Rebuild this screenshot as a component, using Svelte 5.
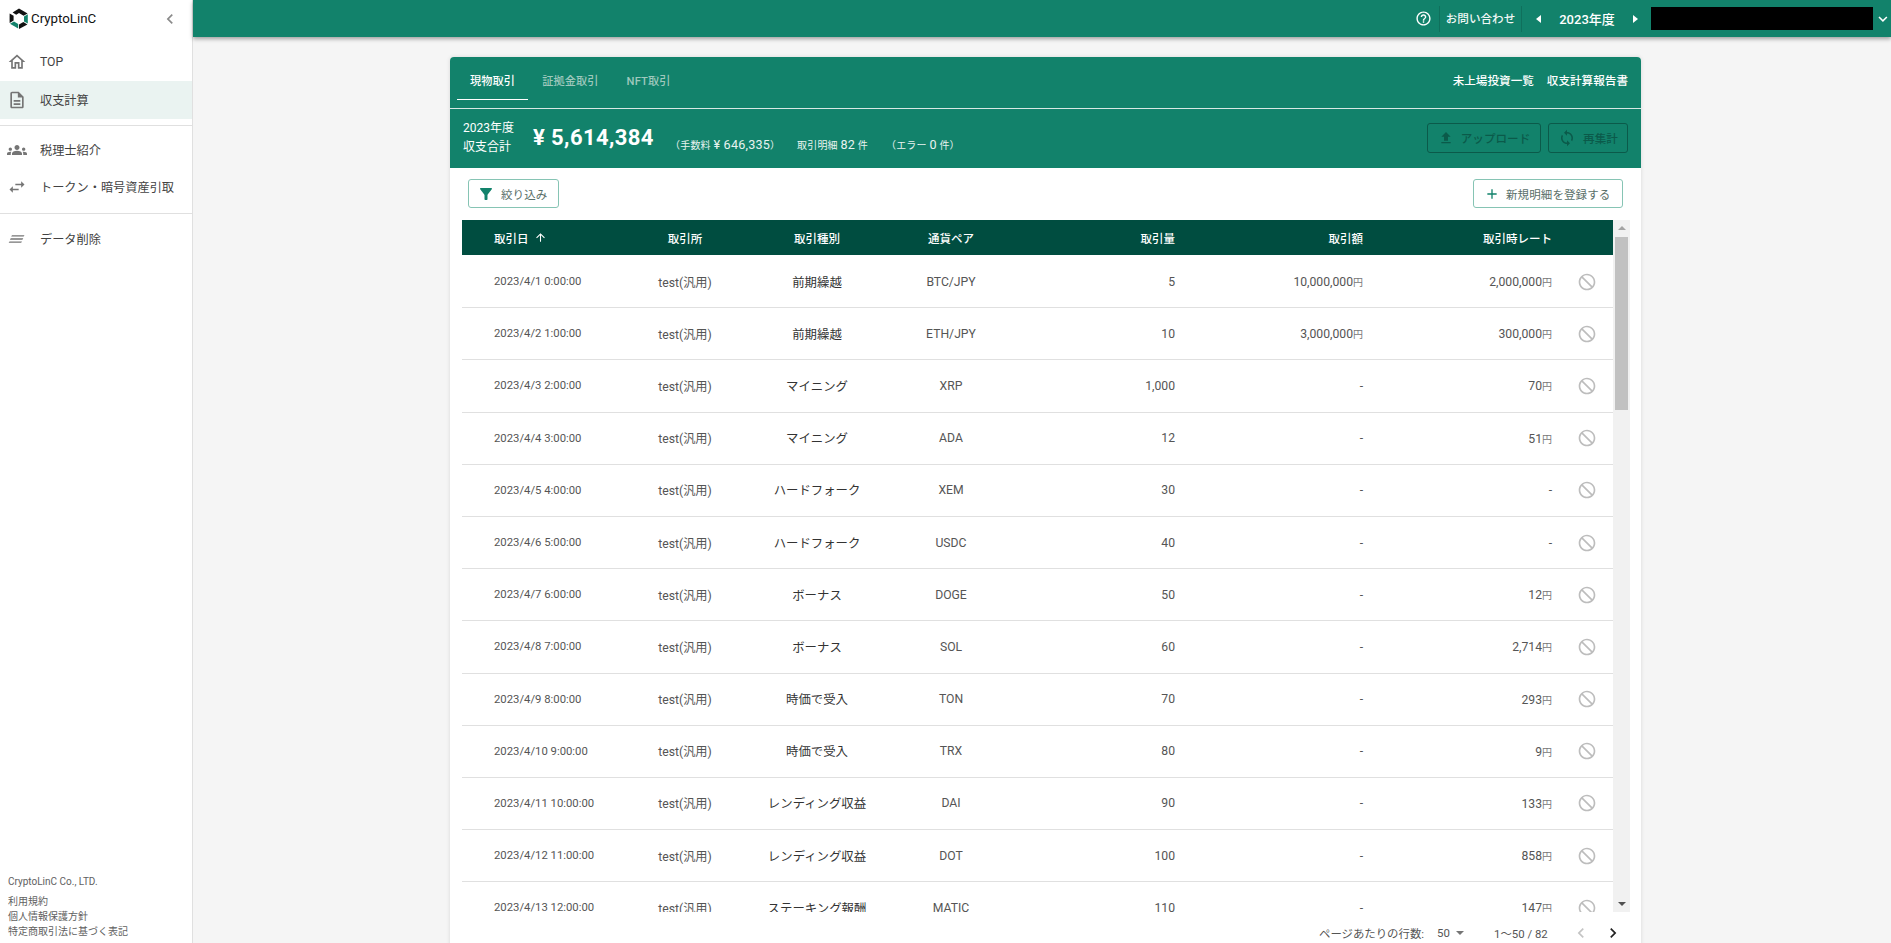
<script>
  const P = {
    home: 'M12 5.69l5 4.5V18h-2v-6H9v6H7v-7.81l5-4.5M12 3L2 12h3v8h6v-6h2v6h6v-8h3L12 3z',
    doc: 'M8 16h8v2H8zm0-4h8v2H8zm6-10H6c-1.1 0-2 .9-2 2v16c0 1.1.89 2 1.99 2H18c1.1 0 2-.9 2-2V8l-6-6zm4 18H6V4h7v5h5v11z',
    groups: 'M4 13c1.1 0 2-.9 2-2 0-1.1-.9-2-2-2s-2 .9-2 2c0 1.1.9 2 2 2zm1.13 1.1c-.37-.06-.74-.1-1.13-.1-.99 0-1.93.21-2.78.58C.48 14.9 0 15.62 0 16.43V18h4.5v-1.61c0-.83.23-1.61.63-2.29zM20 13c1.1 0 2-.9 2-2 0-1.1-.9-2-2-2s-2 .9-2 2c0 1.1.9 2 2 2zm4 3.43c0-.81-.48-1.53-1.22-1.85-.85-.37-1.79-.58-2.78-.58-.39 0-.76.04-1.13.1.4.68.63 1.46.63 2.29V18H24v-1.57zm-7.76-2.78C15.07 13.13 13.63 12.75 12 12.75c-1.63 0-3.07.39-4.24.9C6.68 14.13 6 15.21 6 16.39V18h12v-1.61c0-1.18-.68-2.26-1.76-2.74zM12 6c1.66 0 3 1.34 3 3 0 1.66-1.34 3-3 3s-3-1.34-3-3c0-1.66 1.34-3 3-3z',
    swap: 'M6.99 11L3 15l3.99 4v-3H14v-2H6.99v-3zM21 9l-3.99-4v3H10v2h7.01v3L21 9z',
    lines: 'M6 7.5h15l-1 1.6H5zM4.5 11.2h15l-1 1.6h-15zM3 14.9h15l-1 1.6H2z',
    help: 'M11 18h2v-2h-2v2zm1-16C6.48 2 2 6.48 2 12s4.48 10 10 10 10-4.48 10-10S17.52 2 12 2zm0 18c-4.41 0-8-3.59-8-8s3.59-8 8-8 8 3.59 8 8-3.59 8-8 8zm0-14c-2.21 0-4 1.79-4 4h2c0-1.1.9-2 2-2s2 .9 2 2c0 2-3 1.75-3 5h2c0-2.25 3-2.5 3-5 0-2.21-1.79-4-4-4z',
    filter: 'M4.25 5.61C6.27 8.2 10 13 10 13v6c0 .55.45 1 1 1h2c.55 0 1-.45 1-1v-6s3.72-4.8 5.74-7.39c.51-.66.04-1.61-.79-1.61H5.04c-.83 0-1.3.95-.79 1.61z',
    upload: 'M9 16h6v-6h4l-7-7-7 7h4zm-4 2h14v2H5z',
    sync: 'M12 4V1L8 5l4 4V6c3.31 0 6 2.69 6 6 0 1.01-.25 1.97-.7 2.8l1.46 1.46C19.54 15.03 20 13.57 20 12c0-4.42-3.58-8-8-8zm0 14c-3.31 0-6-2.69-6-6 0-1.01.25-1.97.7-2.8L5.24 7.74C4.46 8.97 4 10.43 4 12c0 4.42 3.58 8 8 8v3l4-4-4-4v3z',
    plus: 'M19 13h-6v6h-2v-6H5v-2h6V5h2v6h6v2z',
    block: 'M12 2C6.48 2 2 6.48 2 12s4.48 10 10 10 10-4.48 10-10S17.52 2 12 2zM4 12c0-4.42 3.58-8 8-8 1.85 0 3.55.63 4.9 1.69L5.69 16.9C4.63 15.55 4 13.85 4 12zm8 8c-1.85 0-3.55-.63-4.9-1.69L18.31 7.1C19.37 8.45 20 10.15 20 12c0 4.42-3.58 8-8 8z',
    left: 'M15.41 7.41L14 6l-6 6 6 6 1.41-1.41L10.83 12z',
    right: 'M10 6L8.59 7.41 13.17 12l-4.58 4.59L10 18l6-6z',
    down: 'M7.41 8.59L12 13.17l4.59-4.58L18 10l-6 6-6-6z',
    arrowUp: 'M4 12l1.41 1.41L11 7.83V20h2V7.83l5.58 5.59L20 12l-8-8-8 8z'
  };
  const rows = [
    ['2023/4/1 0:00:00','前期繰越','BTC/JPY','5','10,000,000','2,000,000'],
    ['2023/4/2 1:00:00','前期繰越','ETH/JPY','10','3,000,000','300,000'],
    ['2023/4/3 2:00:00','マイニング','XRP','1,000','','70'],
    ['2023/4/4 3:00:00','マイニング','ADA','12','','51'],
    ['2023/4/5 4:00:00','ハードフォーク','XEM','30','',''],
    ['2023/4/6 5:00:00','ハードフォーク','USDC','40','',''],
    ['2023/4/7 6:00:00','ボーナス','DOGE','50','','12'],
    ['2023/4/8 7:00:00','ボーナス','SOL','60','','2,714'],
    ['2023/4/9 8:00:00','時価で受入','TON','70','','293'],
    ['2023/4/10 9:00:00','時価で受入','TRX','80','','9'],
    ['2023/4/11 10:00:00','レンディング収益','DAI','90','','133'],
    ['2023/4/12 11:00:00','レンディング収益','DOT','100','','858'],
    ['2023/4/13 12:00:00','ステーキング報酬','MATIC','110','','147']
  ];
</script>

{#snippet icon(name, size, cls = '')}
  <svg class={cls} width={size} height={size} viewBox="0 0 24 24" fill="currentColor" aria-hidden="true"><path d={P[name]} /></svg>
{/snippet}

{#snippet yen(v)}
  {#if v}{v}<span class="unit">円</span>{:else}-{/if}
{/snippet}

<div class="app">
  <aside class="side">
    <div class="brand">
      <div class="logo">
        <svg width="20" height="21" viewBox="0 0 20 21" aria-hidden="true">
          <path d="M10 0.5 L18.6 5.4 L14.6 7.7 L10 5.1 L7.2 6.7 L3.6 4.4Z" fill="#111" />
          <path d="M18.8 6.2 V15.6 L15 13.4 V8.4 Z" fill="#12826b" />
          <path d="M18.4 16.4 L10 21 V16.6 L14.4 14.1Z" fill="#111" />
          <path d="M9.2 20.6 L1 15.8 L5 13.6 L9.2 16Z" fill="#12826b" />
          <path d="M0.6 15 V5.4 L4.6 7.7 V12.6Z" fill="#111" />
        </svg>
        <span>CryptoLinC</span>
      </div>
      {@render icon('left', 20, 'collapse')}
    </div>
    <nav class="nav first">
      <div class="item">{@render icon('home', 20)}<span>TOP</span></div>
      <div class="item active">{@render icon('doc', 20)}<span>収支計算</span></div>
    </nav>
    <nav class="nav second">
      <div class="item tall">{@render icon('groups', 20)}<span>税理士紹介</span></div>
      <div class="item tall">{@render icon('swap', 20)}<span>トークン・暗号資産引取</span></div>
    </nav>
    <nav class="nav third">
      <div class="item tall">{@render icon('lines', 20)}<span>データ削除</span></div>
    </nav>
    <footer class="legal">
      <div class="co">CryptoLinC Co., LTD.</div>
      <div>利用規約</div>
      <div>個人情報保護方針</div>
      <div>特定商取引法に基づく表記</div>
    </footer>
  </aside>

  <div class="main">
    <header class="top">
      <div class="top-help">{@render icon('help', 17)}</div>
      <div class="top-contact">お問い合わせ</div>
      <div class="top-year">
        <span class="tri left"></span>
        <span class="year">2023年度</span>
        <span class="tri right"></span>
      </div>
      <div class="top-user"><span class="redact"></span>{@render icon('down', 18)}</div>
    </header>

    <section class="content">
      <div class="card">
        <div class="tabs">
          <div class="tab on">現物取引</div>
          <div class="tab">証拠金取引</div>
          <div class="tab">NFT取引</div>
          <div class="links"><span>未上場投資一覧</span><span>収支計算報告書</span></div>
        </div>
        <div class="summary">
          <div class="sum-label"><div>2023年度</div><div>収支合計</div></div>
          <div class="amount">¥ 5,614,384</div>
          <div class="meta fee">（手数料 <b>¥ 646,335</b>）</div>
          <div class="meta">取引明細 <b>82</b> 件</div>
          <div class="meta err">（エラー <b>0</b> 件）</div>
          <div class="actions">
            <div class="ghost up">{@render icon('upload', 16)}<span>アップロード</span></div>
            <div class="ghost re">{@render icon('sync', 18)}<span>再集計</span></div>
          </div>
        </div>
        <div class="tools">
          <div class="btn filter">{@render icon('filter', 18)}<span>絞り込み</span></div>
          <div class="btn new">{@render icon('plus', 16)}<span>新規明細を登録する</span></div>
        </div>
        <div class="table-wrap">
          <div class="table">
            <div class="row head">
              <div class="c date">取引日<span class="sort">{@render icon('arrowUp', 13)}</span></div>
              <div class="c mid">取引所</div>
              <div class="c mid">取引種別</div>
              <div class="c mid">通貨ペア</div>
              <div class="c num">取引量</div>
              <div class="c num">取引額</div>
              <div class="c num">取引時レート</div>
              <div class="c"></div>
            </div>
            {#each rows as r}
              <div class="row">
                <div class="c date">{r[0]}</div>
                <div class="c mid">test(汎用)</div>
                <div class="c mid kind">{r[1]}</div>
                <div class="c mid">{r[2]}</div>
                <div class="c num">{r[3]}</div>
                <div class="c num">{@render yen(r[4])}</div>
                <div class="c num">{@render yen(r[5])}</div>
                <div class="c act">{@render icon('block', 20, 'flip')}</div>
              </div>
            {/each}
          </div>
          <div class="scroll">
            <span class="arr upw"></span>
            <span class="thumb"></span>
            <span class="arr dnw"></span>
          </div>
        </div>
        <div class="pager">
          <span class="pl">ページあたりの行数:</span>
          <span class="ps">50</span><span class="ptri"></span>
          <span class="pr">1〜50 / 82</span>
          {@render icon('left', 20, 'pprev')}
          {@render icon('right', 20, 'pnext')}
        </div>
      </div>
    </section>
  </div>
</div>

<style>
  :global(body) { margin: 0; background: #f5f5f5; }
  .app {
    display: flex; height: 943px; overflow: hidden; background: #f5f5f5;
    font-family: Roboto, "Noto Sans CJK JP", sans-serif; color: #424242;
  }
  .side {
    width: 192px; flex: none; box-sizing: content-box; background: #fff;
    border-right: 1px solid #e0e0e0; display: flex; flex-direction: column;
  }
  .brand { height: 37px; display: flex; align-items: center; justify-content: space-between; padding: 0 12px 0 9px; }
  .logo { display: flex; align-items: center; gap: 2px; font-size: 13.3px; color: #111; }
  :global(.collapse) { color: #8a8a8a; }
  .nav { border-bottom: 1px solid #e0e0e0; }
  .nav.first { padding: 6px 0; margin-bottom: 5px; }
  .nav.second { padding-bottom: 8px; margin-bottom: 6px; }
  .nav.third { border-bottom: 0; }
  .item { display: flex; align-items: center; height: 38px; padding-left: 7px; gap: 13px; font-size: 12.2px; color: #424242; }
  .item svg { color: #757575; flex: none; }
  .item.active { background: #eaf3f1; }
  .item.tall { height: 37px; }
  .legal { margin-top: auto; padding: 0 8px 4px; font-size: 10px; line-height: 15px; color: #616161; }
  .legal .co { margin-bottom: 5px; }

  .main { flex: 1; min-width: 0; display: flex; flex-direction: column; }
  .top {
    height: 37px; flex: none; background: #12826b; color: #fff;
    display: flex; align-items: center; justify-content: flex-end;
    box-shadow: 0 2px 4px rgba(0,0,0,.35); position: relative; z-index: 2;
  }
  .top-help { width: 31px; height: 26px; display: flex; align-items: center; justify-content: center; border-right: 1px solid #0f705c; color: #fff; }
  .top-contact { width: 81px; height: 26px; line-height: 26px; text-align: center; font-size: 11.6px; font-weight: 500; color: #f0f7f5; border-right: 1px solid #0f705c; }
  .top-year { width: 129px; height: 26px; display: flex; align-items: center; justify-content: space-between; padding: 0 13px 0 14px; box-sizing: border-box; }
  .year { font-size: 13px; font-weight: 500; }
  .tri { width: 0; height: 0; border-top: 4px solid transparent; border-bottom: 4px solid transparent; }
  .tri.left { border-right: 5px solid #fff; }
  .tri.right { border-left: 5px solid #fff; }
  .top-user { width: 241px; display: flex; align-items: center; margin-right: -1px; box-sizing: border-box; gap: 1px; }
  .redact { width: 224px; height: 23px; background: #000; }

  .content { flex: 1; min-height: 0; padding: 20px 250px 0 257px; }
  .card { background: #fff; border-radius: 4px 4px 0 0; box-shadow: 0 0 4px rgba(0,0,0,.12); height: 900px; overflow: hidden; }
  .tabs { height: 51px; background: #12826b; border-bottom: 1px solid #d8e8e4; display: flex; padding-left: 7px; }
  .tab { height: 43px; line-height: 49px; padding: 0 13px; font-size: 11.2px; font-weight: 500; letter-spacing: 0.1px; color: #9fc8bd; box-sizing: border-box; }
  .tab.on { color: #fff; border-bottom: 1.5px solid #fff; }
  .tab + .tab { padding: 0 14px; }
  .links { margin-left: auto; display: flex; gap: 13px; padding-right: 13px; line-height: 48px; font-size: 11.6px; font-weight: 500; color: #fff; }

  .summary { height: 59px; background: #12826b; color: #e8f3f0; display: flex; align-items: flex-end; padding-left: 13px; box-sizing: border-box; }
  .sum-label { font-size: 12px; line-height: 19px; color: #fff; padding-bottom: 11px; width: 70px; flex: none; }
  .amount { font-size: 22px; font-weight: 700; color: #fff; letter-spacing: 0.4px; width: 137px; flex: none; line-height: 26px; padding-bottom: 17px; white-space: nowrap; }
  .meta { font-size: 10px; line-height: 14px; padding-bottom: 15px; margin-right: 18px; white-space: nowrap; letter-spacing: 0.2px; }
  .meta b { font-size: 12.6px; font-weight: 400; }
  .fee { width: 122px; margin-right: 5px; flex: none; }
  .actions { margin-left: auto; display: flex; gap: 7px; padding: 0 13px 15px 0; }
  .ghost { height: 30px; box-sizing: border-box; border: 1px solid #0b5a4a; border-radius: 3px; display: flex; align-items: center; justify-content: center; gap: 7px; color: #0b5a4a; font-size: 11.6px; font-weight: 500; }
  .ghost.up { width: 114px; }
  .ghost.re { width: 80px; }

  .tools { display: flex; justify-content: space-between; padding: 11px 18px 0 18px; height: 52px; box-sizing: border-box; }
  .btn { height: 29px; box-sizing: border-box; border: 1px solid #86c4b4; border-radius: 3px; display: flex; align-items: center; gap: 6px; font-size: 11.5px; color: #5a6f69; letter-spacing: 0.1px; }
  .btn svg { color: #12826b; }
  .btn.filter { width: 91px; padding-left: 8px; }
  .btn.new { width: 150px; padding-left: 10px; }

  .table-wrap { display: flex; margin-left: 12px; height: 692px; overflow: hidden; }
  .table { width: 1151px; flex: none; }
  .row {
    display: grid; grid-template-columns: 166px 114px 150px 118px 165px 188px 189px 61px;
    align-items: center; height: 52.2px; box-sizing: border-box;
    border-bottom: 1px solid #e0e0e0; font-size: 12.2px; color: #555;
  }
  .row.head { height: 35px; margin-bottom: 1px; background: #004d40; color: #fff; border-bottom: 0; font-size: 11.5px; font-weight: 500; }
  .c { white-space: nowrap; }
  .date { padding-left: 32px; display: flex; align-items: center; font-size: 11.3px; }
  .head .date { font-size: 11.5px; }
  .mid { text-align: center; }
  .kind { font-size: 12.4px; color: #333; }
  .num { text-align: right; }
  .unit { font-size: 10px; color: #777; }
  .sort { display: inline-flex; margin-left: 5px; }
  .act { display: flex; padding-left: 25px; color: #bdbdbd; }
  :global(.flip) { transform: scaleX(-1); }
  .scroll { width: 17px; flex: none; background: #f1f1f1; display: flex; flex-direction: column; align-items: center; }
  .arr { width: 0; height: 0; border-left: 4px solid transparent; border-right: 4px solid transparent; }
  .upw { border-bottom: 4px solid #a3a3a3; margin: 6px 0 7px; }
  .thumb { width: 13px; height: 173px; background: #c1c1c1; }
  .dnw { border-top: 4px solid #505050; margin-top: auto; margin-bottom: 6px; }

  .pager { height: 42px; display: flex; align-items: center; font-size: 11.4px; color: #555; padding-left: 869px; }
  .pl { width: 118px; flex: none; white-space: nowrap; }
  .ps { width: 19px; flex: none; }
  .ptri { width: 0; height: 0; border-left: 4px solid transparent; border-right: 4px solid transparent; border-top: 4px solid #757575; margin-right: 30px; flex: none; }
  .pr { width: 77px; flex: none; }
  :global(.pprev) { color: #c4c4c4; margin-right: 12px; flex: none; }
  :global(.pnext) { color: #222; flex: none; }
</style>
